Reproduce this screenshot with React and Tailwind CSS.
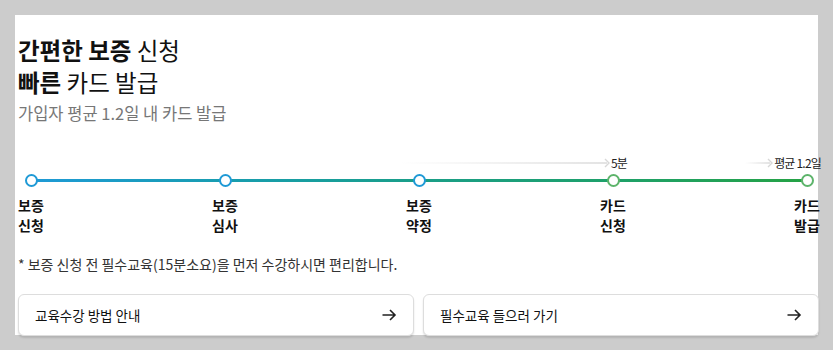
const font = { fontFamily: '"Noto Sans CJK KR", "Noto Sans", sans-serif' }

const steps = [
  { top: '보증', bottom: '신청', color: 'border-[#1f9ad6]' },
  { top: '보증', bottom: '심사', color: 'border-[#1f9ad6]' },
  { top: '보증', bottom: '약정', color: 'border-[#1f9ad6]' },
  { top: '카드', bottom: '신청', color: 'border-[#5db46b]' },
  { top: '카드', bottom: '발급', color: 'border-[#5db46b]' },
]

function ArrowRight() {
  return (
    <svg width="16" height="16" viewBox="0 0 16 16" fill="none" stroke="#222" strokeWidth="1.6">
      <path d="M1.5 8h12.5M9 3l5 5-5 5" />
    </svg>
  )
}

function Hint({ label, className }) {
  return (
    <div className={'absolute top-0 flex items-center ' + className}>
      <div className="h-[2px] flex-1 bg-gradient-to-r from-transparent to-[#e3e3e3]" />
      <svg width="6" height="10" viewBox="0 0 6 10" fill="none" stroke="#d8d8d8" strokeWidth="1.4" className="-ml-[3px]">
        <path d="M1 1l4 4-4 4" />
      </svg>
      <span className="text-[12px] leading-none tracking-[-0.8px] text-[#222] ml-[1px] whitespace-nowrap">{label}</span>
    </div>
  )
}

export default function App() {
  return (
    <div className="h-[350px] bg-[#cccccc] pt-[15px] pl-[15px] overflow-hidden" style={font}>
      <div className="w-[803px] h-[320px] bg-white">
        <div className="w-[805px] pl-[3px] pt-[19px]">
          <h1 className="text-[23.5px] leading-[32px] text-[#111]">
            <b className="font-bold">간편한 보증</b> 신청
          </h1>
          <h2 className="text-[23.5px] leading-[32px] text-[#111]">
            <b className="font-bold">빠른</b> 카드 발급
          </h2>
          <p className="text-[16.5px] leading-[20px] mt-[5px] text-[#777]">가입자 평균 1.2일 내 카드 발급</p>

          <div className="relative mt-[34px] w-[802px]">
            <Hint label="5분" className="left-[382px] w-[227px]" />
            <Hint label="평균 1.2일" className="left-[727px] w-[76px]" />
            <div className="relative pt-[17px]">
              <div className="absolute left-[13px] right-[13px] top-[22px] h-[3px] bg-gradient-to-r from-[#1f9ad6] via-[#1a9e88] to-[#25a244]" />
              <div className="relative flex justify-between">
                {steps.map((s, i) => (
                  <div key={i} className="w-[26px] flex flex-col items-center">
                    <div className={'w-[13px] h-[13px] rounded-full border-2 bg-white ' + s.color} />
                    <div className="mt-[8px] text-[14px] leading-[20px] font-bold text-[#111] whitespace-nowrap text-center">
                      <div>{s.top}</div>
                      <div>{s.bottom}</div>
                    </div>
                  </div>
                ))}
              </div>
            </div>
          </div>

          <p className="mt-[19px] text-[14px] leading-[20px] text-[#333]">
            * 보증 신청 전 필수교육(15분소요)을 먼저 수강하시면 편리합니다.
          </p>

          <div className="mt-[20px] flex gap-[9px] w-[801px]">
            {['교육수강 방법 안내', '필수교육 들으러 가기'].map((t) => (
              <button
                key={t}
                className="flex-1 h-[42px] flex items-center justify-between pl-[16px] pr-[16px] rounded-[6px] border border-[#dddddd] bg-white shadow-[0_2px_2px_rgba(0,0,0,0.12)] text-[13.5px] text-[#111]"
              >
                <span>{t}</span>
                <ArrowRight />
              </button>
            ))}
          </div>
        </div>
      </div>
    </div>
  )
}
